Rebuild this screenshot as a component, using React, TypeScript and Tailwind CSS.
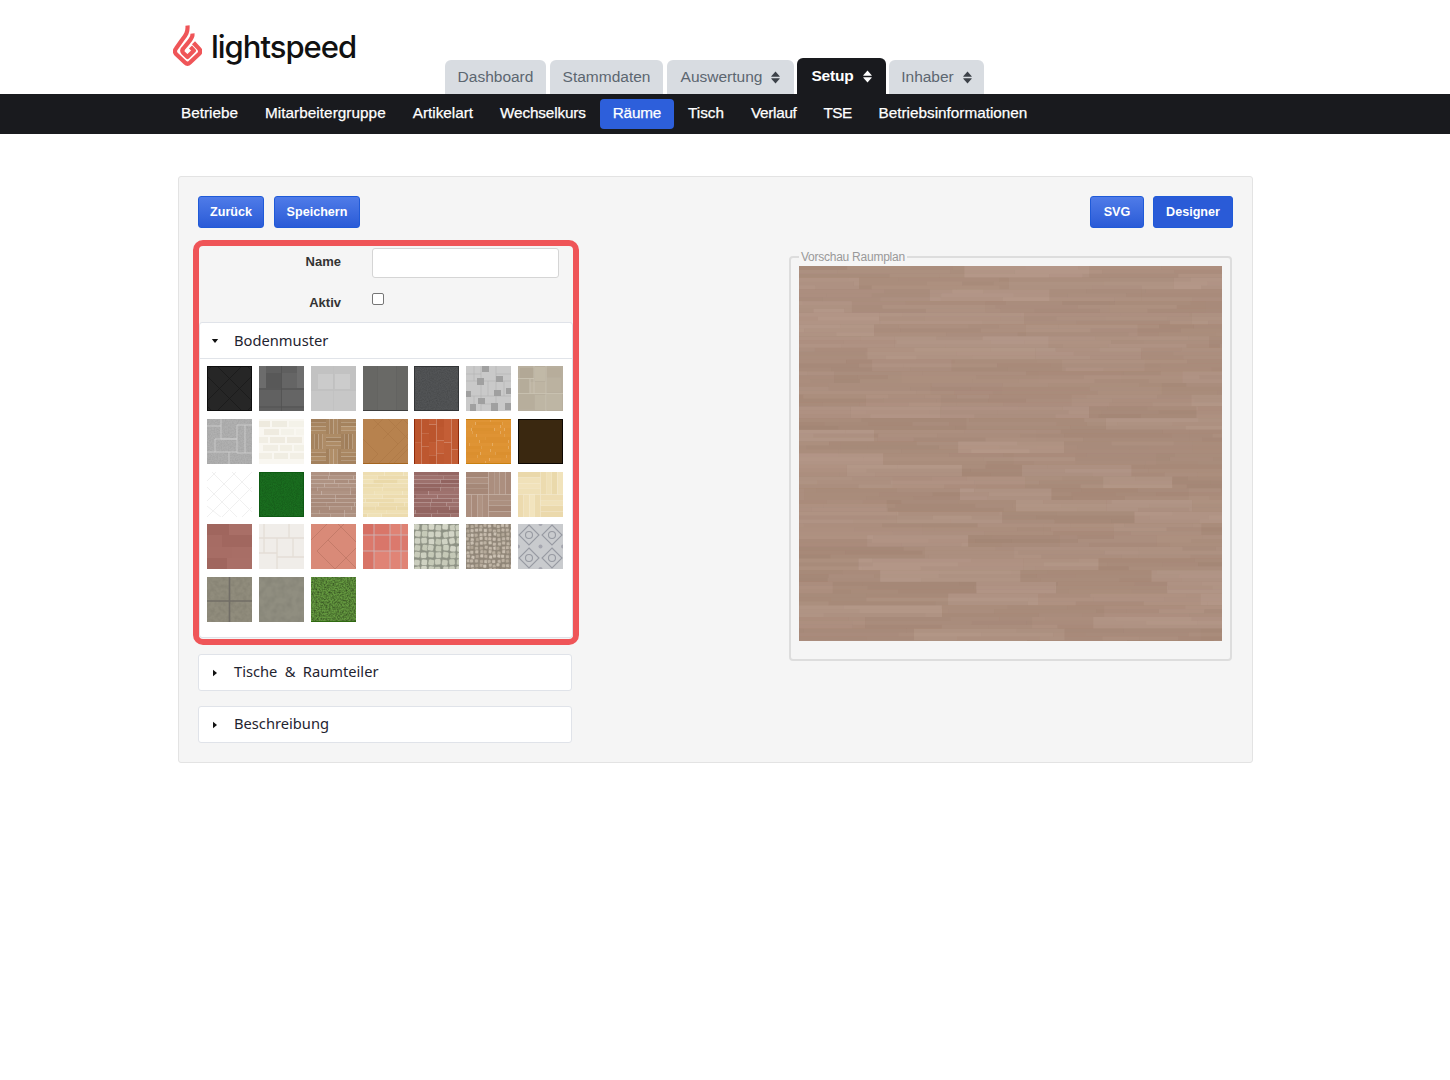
import React from "react";

function rng(seed: number) {
  let s = seed;
  return () => {
    s = (s * 16807) % 2147483647;
    return (s - 1) / 2147483646;
  };
}

function mix(a: number[], b: number[], t: number) {
  return "rgb(" + a.map((v, i) => Math.round(v + (b[i] - v) * t)).join(",") + ")";
}

function planks(seed: number, w: number, h: number, rowH: number, minW: number, maxW: number, dark: number[], light: number[]) {
  const r = rng(seed);
  const out: React.ReactNode[] = [];
  let k = 0;
  for (let y = 0; y < h; y += rowH) {
    let x = -r() * maxW * 0.5;
    while (x < w) {
      const pw = minW + r() * (maxW - minW);
      out.push(<rect key={k++} x={x} y={y} width={pw} height={rowH} fill={mix(dark, light, r())} />);
      x += pw;
    }
  }
  return out;
}

function vplanks(seed: number, w: number, h: number, colW: number, dark: number[], light: number[]) {
  const r = rng(seed);
  const out: React.ReactNode[] = [];
  let k = 0;
  for (let x = 0; x < w; x += colW) {
    let y = -r() * 15;
    while (y < h) {
      const ph = 10 + r() * 24;
      out.push(<rect key={k++} x={x} y={y} width={colW} height={ph} fill={mix(dark, light, r())} />);
      y += ph;
    }
  }
  return out;
}

function parquet(seed: number, cell: number, dark: number[], light: number[]) {
  const r = rng(seed);
  const out: React.ReactNode[] = [];
  let k = 0;
  for (let i = 0; i < 45 / cell; i++) {
    for (let j = 0; j < 45 / cell; j++) {
      const horiz = (i + j) % 2 === 0;
      for (let n = 0; n < 4; n++) {
        const c = mix(dark, light, r());
        const t = cell / 4;
        out.push(
          horiz ? (
            <rect key={k++} x={i * cell} y={j * cell + n * t} width={cell} height={t} fill={c} />
          ) : (
            <rect key={k++} x={i * cell + n * t} y={j * cell} width={t} height={cell} fill={c} />
          )
        );
      }
    }
  }
  return out;
}

function blocks(seed: number, items: number[][], dark: number[], light: number[]) {
  const r = rng(seed);
  return items.map((b, i) => <rect key={i} x={b[0]} y={b[1]} width={b[2]} height={b[3]} fill={mix(dark, light, r())} />);
}

function Noise({ id, freq, opacity, seed }: { id: string; freq: number; opacity: number; seed: number }) {
  return (
    <>
      <filter id={id} x="0" y="0" width="100%" height="100%">
        <feTurbulence type="fractalNoise" baseFrequency={freq} numOctaves={2} seed={seed} />
        <feColorMatrix type="matrix" values="0 0 0 0 0  0 0 0 0 0  0 0 0 0 0  1.6 0 0 0 -0.55" />
      </filter>
      <rect width="45" height="45" filter={"url(#" + id + ")"} opacity={opacity} />
    </>
  );
}

function cobble(seed: number, size: number, fill: number[], light: number[], line: string) {
  const r = rng(seed);
  const out: React.ReactNode[] = [];
  let k = 0;
  for (let y = 0; y < 45; y += size) {
    for (let x = 0; x < 45; x += size) {
      const jx = r() * 1.6 - 0.8;
      const jy = r() * 1.6 - 0.8;
      out.push(
        <rect key={k++} x={x + jx} y={y + jy} width={size - 0.6} height={size - 0.6} rx={size / 4} fill={mix(fill, light, r())} stroke={line} strokeWidth="0.6" transform={"rotate(" + (r() * 24 - 12) + " " + (x + size / 2) + " " + (y + size / 2) + ")"} />
      );
    }
  }
  return out;
}

const swatches: React.ReactNode[] = [
  <>
    <rect width="45" height="45" fill="#262626" />
    <path d="M-10 15 L15 -10 M-10 45 L45 -10 M0 55 L55 0 M30 55 L55 30 M-10 30 L15 55 M-10 0 L45 55 M0 -10 L55 45 M30 -10 L55 15" stroke="#1b1b1b" strokeWidth="0.8" fill="none" />
    <rect x="0.5" y="0.5" width="44" height="44" fill="none" stroke="#0f0f0f" />
  </>,
  <>
    <rect width="45" height="45" fill="#5f5f5f" />
    {blocks(3, [[7, 7, 15, 15], [23, 7, 15, 15], [0, 24, 22, 16], [23, 24, 22, 16], [0, 0, 7, 22], [38, 0, 7, 22]], [88, 88, 88], [122, 122, 122])}
    <path d="M22.5 0V45M0 23H45M0 41H45" stroke="#515151" strokeWidth="0.7" />
  </>,
  <>
    <rect width="45" height="45" fill="#c2c2c2" />
    <rect x="7" y="8" width="15" height="15" fill="#cbcbcb" />
    <rect x="24" y="8" width="15" height="15" fill="#cccccc" />
    <rect y="25" width="45" height="20" fill="#c7c7c7" />
    <path d="M22.5 0V45M0 24H45" stroke="#bfbfbf" strokeWidth="0.6" />
  </>,
  <>
    <rect width="45" height="45" fill="#676764" />
    <path d="M15 0V45M33 0V45" stroke="#60605d" strokeWidth="0.8" />
    <rect x="15" width="18" height="45" fill="#696966" />
    <rect y="44" width="45" height="1" fill="#3f3f3e" />
  </>,
  <>
    <rect width="45" height="45" fill="#525456" />
    <Noise id="n5" freq={0.9} opacity={0.15} seed={5} />
    <rect x="0.5" y="0.5" width="44" height="44" fill="none" stroke="#333537" />
  </>,
  <>
    <rect width="45" height="45" fill="#c9c9c9" />
    <path d="M0 15H45M0 30H45M15 0V45M30 0V45M8 0V15M22 15V30M38 15V30M8 30V45M0 8H15M30 8H45M15 38H30" stroke="#b4b4b4" strokeWidth="0.7" />
    <path d="M16 0h7v6h-7zM30 10h7v6h-7zM11 12h7v7h-7zM0 25h5v6h-5zM28 24h7v6h-7zM40 22h5v6h-5zM12 32h7v6h-7zM25 37h7v8h-7zM4 38h6v7h-6zM39 37h6v7h-6z" fill="#a0a0a0" />
  </>,
  <>
    <rect width="45" height="45" fill="#b8af9e" />
    {blocks(7, [[2, 2, 14, 10], [17, 1, 10, 14], [28, 2, 15, 9], [2, 13, 9, 14], [12, 16, 16, 12], [29, 12, 14, 14], [1, 28, 15, 15], [17, 29, 11, 15], [29, 27, 15, 17]], [178, 168, 150], [194, 186, 168])}
    <path d="M0 12.5H16M16 0V28M28 0V45M0 27.5H45M12 13V27" stroke="#cac4b4" strokeWidth="0.8" fill="none" />
  </>,
  <>
    <rect width="45" height="45" fill="#b0b0b0" />
    <Noise id="n8" freq={0.7} opacity={0.08} seed={8} />
    <path d="M0 7H14V20H30V6H45M14 0V7M30 20V34H45M8 20H30M8 20V33H22V45M0 33H8M22 33H30M38 6V34" stroke="#cdcdcd" strokeWidth="0.9" fill="none" />
  </>,
  <>
    <rect width="45" height="45" fill="#f9f7f1" />
    {blocks(9, [[0, 2, 11, 6], [13, 2, 15, 6], [30, 2, 15, 6], [5, 10, 15, 6], [22, 10, 13, 6], [37, 10, 8, 6], [0, 18, 9, 6], [11, 18, 15, 6], [28, 18, 15, 6], [4, 26, 15, 6], [21, 26, 12, 6], [35, 26, 10, 6], [0, 34, 13, 6], [15, 34, 14, 6], [31, 34, 14, 6]], [238, 234, 222], [246, 244, 236])}
  </>,
  <>{parquet(10, 15, [160, 126, 90], [178, 144, 106])}</>,
  <>
    <rect width="45" height="45" fill="#b7824e" />
    <path d="M-5 15L15 35L5 45M5 -5L35 25L15 45M20 -5L45 20M35 -5L50 10M0 0L-5 5M30 45L45 30M20 50L50 20M10 10L20 0M20 20L40 0M30 30L50 10" stroke="#ae7a46" strokeWidth="0.8" fill="none" />
    <rect y="44" width="45" height="1" fill="#a5651f" />
  </>,
  <>
    {vplanks(12, 45, 45, 7.5, [186, 84, 44], [198, 96, 56])}
    <rect width="1" height="45" fill="#8f2a0a" />
    <rect x="44" width="1" height="45" fill="#8f2a0a" />
  </>,
  <>
    {planks(13, 45, 45, 3, 10, 30, [219, 143, 46], [224, 149, 54])}
    <rect width="45" height="1" fill="#c9800f" />
    <rect y="44" width="45" height="1" fill="#c9800f" />
  </>,
  <>
    <rect width="45" height="45" fill="#3a2810" />
    <rect x="0.5" y="0.5" width="44" height="44" fill="none" stroke="#0d0803" />
  </>,
  <>
    <rect width="45" height="45" fill="#ffffff" />
    <path d="M-5 14L14 -5M-5 34L34 -5M-5 50L50 -5M10 50L50 10M30 50L50 30M-5 30L20 50M-5 10L35 50M0 -5L50 45M20 -5L50 25M40 -5L50 5" stroke="#f0f0f0" strokeWidth="1" fill="none" />
  </>,
  <>
    <rect width="45" height="45" fill="#1a6e1f" />
    <Noise id="n16" freq={1.1} opacity={0.2} seed={16} />
    <rect x="0.5" y="0.5" width="44" height="44" fill="none" stroke="#0d5a12" />
  </>,
  <>{planks(17, 45, 45, 3.8, 14, 34, [168, 138, 122], [176, 148, 132])}</>,
  <>{planks(18, 45, 45, 3.8, 14, 34, [234, 216, 168], [240, 226, 184])}</>,
  <>{planks(19, 45, 45, 3.8, 14, 34, [146, 100, 96], [160, 116, 112])}</>,
  <>{parquet(20, 22.5, [164, 134, 118], [176, 148, 132])}</>,
  <>{parquet(21, 22.5, [234, 216, 170], [242, 228, 190])}</>,
  <>
    {blocks(22, [[0, 0, 22, 11], [22, 0, 23, 11], [0, 11, 15, 12], [15, 11, 30, 12], [0, 23, 25, 11], [25, 23, 20, 11], [0, 34, 20, 11], [20, 34, 25, 11]], [160, 102, 94], [170, 112, 104])}
  </>,
  <>
    <rect width="45" height="45" fill="#f0ede9" />
    <path d="M5 0V14M0 14H45M30 0V14M5 14V29M0 29H18M18 14V45M34 14V33M18 33H45" stroke="#e4ddd6" strokeWidth="1.3" fill="none" />
  </>,
  <>
    <rect width="45" height="45" fill="#d98a78" />
    <path d="M-2 18L16 0M6 27L33 0M27 0L45 18M6 27L24 45M17 16L46 45M24 45L45 24" stroke="#c47b69" strokeWidth="1" fill="none" />
  </>,
  <>
    {blocks(25, [[0, 0, 11, 11], [11, 0, 16, 11], [27, 0, 18, 11], [0, 11, 11, 16], [11, 11, 16, 16], [27, 11, 18, 16], [0, 27, 11, 18], [11, 27, 16, 18], [27, 27, 18, 18]], [214, 112, 100], [224, 132, 118])}
    <path d="M11 0V45M27 0V45M0 11H45M0 27H45M38 0V45" stroke="#cdb4b5" strokeWidth="0.9" />
  </>,
  <>
    <rect width="45" height="45" fill="#8d9184" />
    {cobble(26, 7, [196, 200, 182], [212, 214, 200], "#8d9184")}
  </>,
  <>
    <rect width="45" height="45" fill="#8f8577" />
    {cobble(27, 4.4, [176, 164, 148], [206, 196, 182], "#8f8577")}
  </>,
  <>
    <rect width="45" height="45" fill="#c9cbce" />
    {[[11, 11], [34, 11], [11, 34], [34, 34]].map((p, i) => (
      <g key={i} fill="none" stroke="#979aa2" strokeWidth="1.1">
        <path d={"M" + p[0] + " " + (p[1] - 10) + "L" + (p[0] + 10) + " " + p[1] + "L" + p[0] + " " + (p[1] + 10) + "L" + (p[0] - 10) + " " + p[1] + "Z"} />
        <circle cx={p[0]} cy={p[1]} r="3.5" />
      </g>
    ))}
    <circle cx="22.5" cy="22.5" r="2" fill="#a5a6af" />
    <circle cx="0" cy="22.5" r="2" fill="#a5a6af" />
    <circle cx="45" cy="22.5" r="2" fill="#a5a6af" />
    <circle cx="22.5" cy="0" r="2" fill="#a5a6af" />
    <circle cx="22.5" cy="45" r="2" fill="#a5a6af" />
  </>,
  <>
    <rect width="45" height="45" fill="#908c7c" />
    <Noise id="n29" freq={0.25} opacity={0.08} seed={29} />
    <path d="M22.5 0V45M0 24H45" stroke="#716d66" strokeWidth="1.6" />
  </>,
  <>
    <rect width="45" height="45" fill="#908e80" />
    <Noise id="n30" freq={0.15} opacity={0.08} seed={30} />
  </>,
  <>
    <rect width="45" height="45" fill="#64983f" />
    <Noise id="n31" freq={0.6} opacity={0.55} seed={31} />
    <rect y="44" width="45" height="1" fill="#2f6a10" />
  </>,
];

function Swatch({ children }: { children: React.ReactNode }) {
  return (
    <svg viewBox="0 0 45 45" className="block h-[45px] w-[45px] blur-[0.3px]">
      {children}
    </svg>
  );
}

function Sort({ color }: { color: string }) {
  return (
    <svg viewBox="0 0 9 13" className="ml-[9px] h-[13px] w-[9px]" fill={color}>
      <path d="M4.5 0.5 L8.7 5.2 Q9 5.8 8.2 5.8 H0.8 Q0 5.8 0.3 5.2 Z" />
      <path d="M4.5 12.5 L8.7 7.8 Q9 7.2 8.2 7.2 H0.8 Q0 7.2 0.3 7.8 Z" />
    </svg>
  );
}

function Logo() {
  return (
    <div className="mt-[24px] flex w-[272px] items-start self-start">
      <svg viewBox="0 0 29 42" className="h-[42px] w-[29px]" fill="none" stroke="#ef5558" strokeWidth="4.2" strokeLinejoin="round" strokeLinecap="butt">
        <path d="M14.5 1.5 C15 8 13 11 9 16 L3 24.5 C1.4 26.5 1.6 28.2 3 30 L12 38.5 C13.6 40 15.4 40 17 38.5 L26 30 C27.6 28.4 27.6 26.4 26 24.6 L20.5 18.8" />
        <path d="M19.5 9.5 C20 13 18 15.5 15 18.8 L10.3 24.5 C9 26 9 27.6 10.3 29 L14.5 33 L21 26.6 L17.5 23" />
      </svg>
      <span className="ml-[9px] mt-[3px] font-['Inter',sans-serif] text-[31px] font-medium leading-[40px] tracking-[-1px] text-[#111111]">lightspeed</span>
    </div>
  );
}

function Tab({ label, sort, w }: { label: string; sort?: boolean; w: string }) {
  return (
    <div className={"mr-[4px] flex h-[34px] items-center justify-center rounded-t-[6px] bg-[#d8dce1] text-[15.5px] text-[#5c6670] " + w}>
      {label}
      {sort && <Sort color="#3c4148" />}
    </div>
  );
}

function Panel({ label, open, children }: { label: string; open?: boolean; children?: React.ReactNode }) {
  return (
    <div className="rounded-[3px] border border-[#e0e3e9] bg-white">
      <div className={open ? "flex h-[36px] items-center border-b border-[#e1e4e9] pl-[11px]" : "flex h-[35px] items-center pl-[11px]"}>
        {open ? (
          <svg viewBox="0 0 8 5" className="h-[4px] w-[8px]" fill="#111111"><path d="M0 0H8L4 5Z" /></svg>
        ) : (
          <svg viewBox="0 0 5 8" className="ml-[3px] mr-[2px] h-[8px] w-[4px]" fill="#111111"><path d="M0 0L5 4L0 8Z" /></svg>
        )}
        <span className={(open ? "-mt-[2px]" : "-mt-[3px]") + " ml-[15px] font-['Noto_Sans',sans-serif] text-[14.7px] leading-[20px] text-[#1f2430] [word-spacing:3.5px]"}>{label}</span>
      </div>
      {children}
    </div>
  );
}

function Btn({ label, w, dark }: { label: string; w: string; dark?: boolean }) {
  return (
    <button className={"flex h-[32px] items-center justify-center rounded-[3px] border border-[#1f5ad8] text-[12.6px] font-bold text-white " + w + " " + (dark ? "bg-[#2a5bd7]" : "bg-gradient-to-b from-[#4f7be8] to-[#2a5bd7]")}>
      {label}
    </button>
  );
}

function Wood() {
  return (
    <svg viewBox="0 0 423 375" className="block h-[375px] w-[423px] blur-[0.4px]" preserveAspectRatio="none">
      <rect width="423" height="375" fill="#a98b79" />
      {planks(4242, 423, 375, 11.7, 60, 170, [166, 136, 119], [178, 149, 134])}
      {planks(777, 423, 375, 3.9, 30, 120, [150, 120, 104], [200, 176, 162]).map((p, i) => (
        <g key={i} opacity="0.12">{p}</g>
      ))}
    </svg>
  );
}

const subnav: { label: string; cls: string }[] = [
  { label: "Betriebe", cls: "" },
  { label: "Mitarbeitergruppe", cls: "tracking-[0.05px]" },
  { label: "Artikelart", cls: "" },
  { label: "Wechselkurs", cls: "tracking-[-0.15px]" },
  { label: "Räume", cls: "bg-[#2d5fdb] tracking-[-0.2px]" },
  { label: "Tisch", cls: "" },
  { label: "Verlauf", cls: "tracking-[-0.3px]" },
  { label: "TSE", cls: "tracking-[-0.6px]" },
  { label: "Betriebsinformationen", cls: "" },
];

export default function App() {
  return (
    <div className="min-h-[1080px] bg-white font-['Liberation_Sans',Arial,sans-serif]">
      <header className="flex h-[94px] items-end pl-[173px]">
        <Logo />
        <Tab label="Dashboard" w="w-[101px]" />
        <Tab label="Stammdaten" w="w-[113px]" />
        <Tab label="Auswertung" sort w="w-[127px] !mr-[3px]" />
        <div className="mr-[3px] flex h-[36px] w-[89px] items-center justify-center rounded-t-[6px] bg-[#191a1e] text-[15.5px] font-bold tracking-[-0.2px] text-white">
          Setup
          <Sort color="#ffffff" />
        </div>
        <Tab label="Inhaber" sort w="w-[95px]" />
      </header>
      <nav className="flex h-[40px] items-center bg-[#191a1e] pl-[168px]">
        {subnav.map((s) => (
          <a key={s.label} className={"mr-px flex h-[30px] items-center rounded-[4px] px-[13px] pb-[1px] text-[15.3px] text-white [-webkit-text-stroke:0.25px_white] " + s.cls}>
            {s.label}
          </a>
        ))}
      </nav>
      <main className="pl-[178px] pt-[42px]">
        <div className="h-[587px] w-[1075px] rounded-[3px] border border-[#e3e3e3] bg-[#f5f5f5] p-[19px]">
          <div className="flex justify-between">
            <div className="flex gap-[10px]">
              <Btn label="Zurück" w="w-[66px]" />
              <Btn label="Speichern" w="w-[86px]" />
            </div>
            <div className="flex gap-[9px]">
              <Btn label="SVG" w="w-[54px]" />
              <Btn label="Designer" w="w-[80px]" dark />
            </div>
          </div>
          <div className="flex justify-between">
            <div className="w-[374px]">
              <div className="-mx-[5px] mt-[12px] h-[405px] w-[386px] rounded-[10px] border-[6px] border-[#ef5558]">
                <div className="flex h-[76px] pt-[2px]">
                  <div className="w-[142px] pt-[4px] text-right text-[13px] font-bold text-[#333333]">Name</div>
                  <div className="ml-[31px]">
                    <div className="h-[30px] w-[187px] rounded-[3px] border border-[#d5d5d5] bg-white" />
                    <input type="checkbox" className="mt-[15px] block h-[12px] w-[12px] appearance-none rounded-[2px] border border-[#767676] bg-white" />
                  </div>
                </div>
                <div className="-mt-[29px] h-[29px] w-[142px] text-right text-[13px] font-bold leading-[20px] text-[#333333]">Aktiv</div>
                <Panel label="Bodenmuster" open>
                  <div className="grid h-[278px] grid-cols-[repeat(7,45px)] content-start gap-x-[6.85px] gap-y-[7.75px] pl-[7px] pt-[7px]">
                    {swatches.map((s, i) => (
                      <Swatch key={i}>{s}</Swatch>
                    ))}
                  </div>
                </Panel>
              </div>
              <div className="mt-[9px]">
                <Panel label="Tische & Raumteiler" />
              </div>
              <div className="mt-[15px]">
                <Panel label="Beschreibung" />
              </div>
            </div>
            <fieldset className="mr-px mt-[22px] h-[411px] w-[443px] rounded-[4px] border-2 border-[#dddddd] pl-[8px] pr-[8px]">
              <legend className="px-[2px] text-[12px] leading-[14px] tracking-[-0.25px] text-[#999999]">Vorschau Raumplan</legend>
              <div className="mt-[2px]">
                <Wood />
              </div>
            </fieldset>
          </div>
        </div>
      </main>
    </div>
  );
}
